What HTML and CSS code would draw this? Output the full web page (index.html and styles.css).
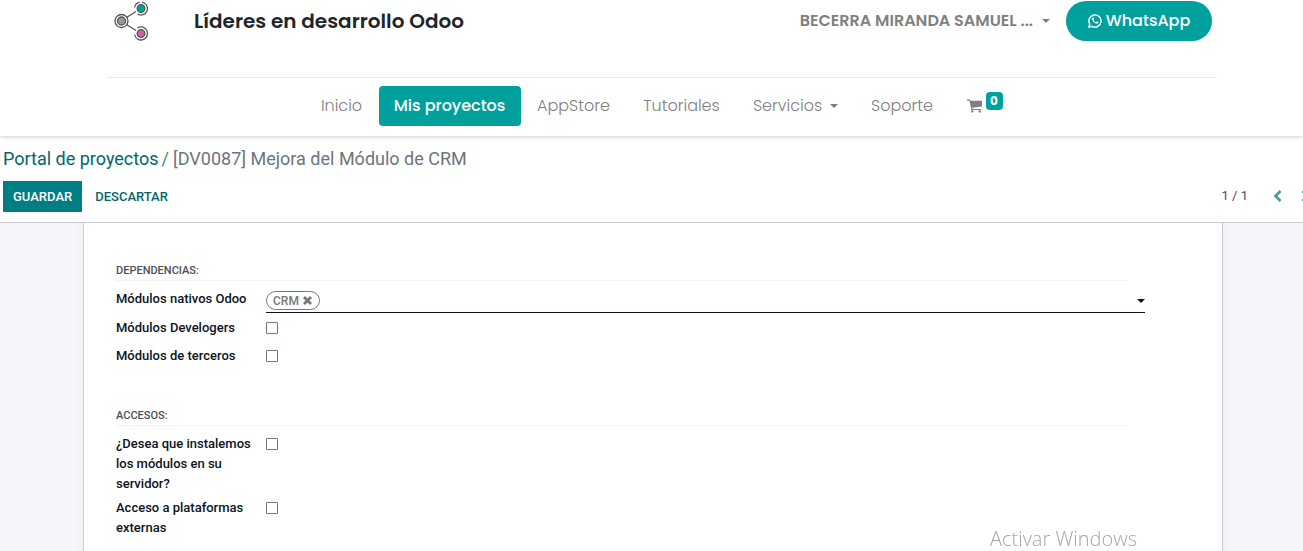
FILE: index.html
```html
<!DOCTYPE html>
<html lang="es">
<head>
<meta charset="utf-8">
<meta name="viewport" content="width=device-width, initial-scale=1">
<title>Mejora del Módulo de CRM</title>
<link rel="stylesheet" href="styles.css">
</head>
<body>
<header class="site-header">
  <div class="brand-row">
    <a class="logo" href="#" aria-label="Portada">
      <svg width="36" height="42" viewBox="0 0 36 42" fill="none" stroke="#555" stroke-width="1.3">
        <path d="M12.500 17.500L22 11.500M12.500 24.500L22 30.500"/>
        <circle cx="7.500" cy="21" r="6.500"/>
        <circle cx="7.500" cy="21" r="4" fill="#999"/>
        <circle cx="27" cy="8.500" r="3.800" fill="#00a09d"/>
        <circle cx="27" cy="33.500" r="3.800" fill="#d062a0"/>
        <path d="M20.600 7.500A6.500 6.500 0 0 1 25.500 2.200M28 2.100A6.500 6.500 0 1 1 23.500 14"/>
        <path d="M23.500 28A6.500 6.500 0 1 1 20.600 34.500M23.500 39A6.500 6.500 0 0 0 28 40"/>
      </svg>
    </a>
    <p class="tagline">Líderes en desarrollo Odoo</p>
    <button class="user-menu" type="button"><span>BECERRA MIRANDA SAMUEL ...</span><span class="caret"></span></button>
    <a class="whatsapp" href="#">
      <svg width="14" height="14" viewBox="0 0 14 14" fill="none" stroke="#fff" stroke-width="1.400">
        <path d="M.9 13.100l.8-3.100A6.100 6.100 0 1 1 4 12.300z"/>
        <path d="M4.700 3.500c-1.200 1-.5 2.900 1 4.400s3.500 2.300 4.600 1.100l.1-.9-1.500-.8-.9.900C6.800 7.800 6 7 5.500 5.900l.7-.8-.6-1.600z" fill="#fff" stroke="none"/>
      </svg>
      <span>WhatsApp</span>
    </a>
  </div>
  <nav class="main-nav">
    <a href="#">Inicio</a>
    <a class="active" href="#">Mis proyectos</a>
    <a href="#">AppStore</a>
    <a href="#">Tutoriales</a>
    <a href="#">Servicios<span class="caret"></span></a>
    <a href="#">Soporte</a>
    <a class="cart" href="#" aria-label="Carrito">
      <svg width="16" height="14" viewBox="0 0 16 14" fill="#808080"><path d="M0 .5h2.700c.4 0 .6.300.7 1.300H15v5.700L5.200 8.700l.3 1.200H14v1.200H4.300L2.500 1.700H0z"/><circle cx="5.300" cy="12.400" r="1.200"/><circle cx="12.700" cy="12.400" r="1.200"/></svg>
      <span class="badge">0</span>
    </a>
  </nav>
</header>
<main>
  <div class="control-panel">
    <nav class="breadcrumb"><a href="#">Portal de proyectos</a><span class="slash">/</span><span>[DV0087] Mejora del Módulo de CRM</span></nav>
    <div class="actions">
      <button class="btn primary" type="button">GUARDAR</button>
      <button class="btn" type="button">DESCARTAR</button>
      <div class="pager">
        <span>1 / 1</span>
        <button type="button" aria-label="Anterior"><svg width="9" height="12" viewBox="0 0 9 12" fill="none" stroke="#4d9599" stroke-width="2.600"><path d="M7.500 1L2.500 6l5 5"/></svg></button>
        <button type="button" aria-label="Siguiente"><svg width="9" height="12" viewBox="0 0 9 12" fill="none" stroke="#4d9599" stroke-width="2.600"><path d="M1.500 1l5 5-5 5"/></svg></button>
      </div>
    </div>
  </div>
  <div class="content">
    <form class="sheet">
      <section class="group">
        <h2>DEPENDENCIAS:</h2>
        <div class="field">
          <label for="native">Módulos nativos Odoo</label>
          <div class="tags">
            <span class="tag">CRM <button type="button" aria-label="Quitar CRM"><svg width="9" height="9" viewBox="0 0 9 9" stroke="#777" stroke-width="2.800"><path d="M1 1l7 7M8 1L1 8"/></svg></button></span>
            <input id="native" type="text">
            <span class="caret"></span>
          </div>
        </div>
        <div class="field"><label for="dev">Módulos Develogers</label><input id="dev" type="checkbox"></div>
        <div class="field"><label for="third">Módulos de terceros</label><input id="third" type="checkbox"></div>
      </section>
      <section class="group">
        <h2>ACCESOS:</h2>
        <div class="field"><label for="install">¿Desea que instalemos los módulos en su servidor?</label><input id="install" type="checkbox"></div>
        <div class="field"><label for="access">Acceso a plataformas externas</label><input id="access" type="checkbox"></div>
      </section>
    </form>
  </div>
</main>
<div class="watermark">Activar Windows</div>
</body>
</html>
```
FILE: styles.css
```css
* { box-sizing: border-box; }
body {
  margin: 0;
  min-height: 100vh;
  display: flex;
  flex-direction: column;
  overflow-x: hidden;
  background: #fff;
  color: #0d1321;
  font: 13px/20px Roboto, sans-serif;
}
a { text-decoration: none; }
button { font: inherit; border: 0; background: none; padding: 0; cursor: pointer; }
svg { display: block; flex: none; }
.caret {
  flex: none;
  border: 4px solid transparent;
  border-top-color: currentColor;
  border-bottom: 0;
}

.site-header {
  padding: 0 86px 0 107px;
  font-family: Poppins, Inter, sans-serif;
  font-size: 16px;
  line-height: 24px;
  box-shadow: 0 1px 4px rgba(0, 0, 0, .2);
}
.brand-row {
  display: flex;
  align-items: flex-start;
  height: 78px;
  padding: 0 5px 0 7px;
  border-bottom: 1px solid #e9e9e9;
}
.logo { width: 80px; }
.tagline {
  margin: 0;
  flex: 1;
  color: #212529;
  font-size: 20px;
  font-weight: 600;
  line-height: 42px;
}
.user-menu {
  display: flex;
  align-items: center;
  gap: 9px;
  height: 41px;
  margin-right: 16px;
  color: #808080;
  font-weight: 600;
}
.whatsapp {
  display: flex;
  align-items: center;
  justify-content: center;
  gap: 4px;
  width: 146px;
  height: 40px;
  margin-top: 1px;
  border-radius: 20px;
  background: #00a09d;
  color: #fff;
  font-weight: 500;
}
.main-nav {
  display: grid;
  grid-template-columns: 74px 142px 106px 110px 118px 95px 70px;
  justify-content: center;
  padding: 8px 0 10px;
}
.main-nav a {
  display: flex;
  align-items: center;
  justify-content: center;
  gap: 8px;
  height: 40px;
  color: #808080;
  font-weight: 300;
}
.main-nav .active {
  border-radius: 4px;
  background: #00a09d;
  color: #fff;
  font-weight: 500;
}
.main-nav .cart { gap: 3px; }
.badge {
  width: 17px;
  height: 18px;
  margin-bottom: 10px;
  border-radius: 4px;
  background: #00a09d;
  color: #fff;
  font-size: 12px;
  font-weight: 700;
  line-height: 18px;
  text-align: center;
}

main { flex: 1; display: flex; flex-direction: column; }
.control-panel {
  padding: 12px 0 10px 3px;
  border-bottom: 1px solid #c9ccd2;
}
.breadcrumb { color: #6c757d; font-size: 18px; line-height: 22px; }
.breadcrumb a { color: #01666b; }
.slash { margin: 0 4px 0 3px; }
.actions { display: flex; align-items: center; margin-top: 11px; }
.btn {
  height: 31px;
  padding: 0 10px;
  color: #01666b;
  font-weight: 500;
}
.btn.primary { margin-right: 3px; background: #017e84; color: #fff; }
.pager {
  display: flex;
  align-items: center;
  gap: 19px;
  margin: 0 -7px 2px auto;
  color: #4c4c4c;
}
.pager span { margin-right: 6px; }

.content {
  flex: 1;
  display: flex;
  padding: 0 80px 0 83px;
  background: #f5f6fa;
}
.sheet {
  flex: 1;
  padding: 38px 77px 32px 32px;
  border: solid #c9ccd2;
  border-width: 0 1px;
  background: #fff;
  box-shadow: 0 0 10px rgba(0, 0, 0, .06);
  clip-path: inset(0 -16px);
}
.group { margin-bottom: 36px; }
.group:last-child { margin-bottom: 0; }
.group h2 {
  margin: 0 17px 8px 0;
  border-bottom: 1px solid #f1f2f4;
  color: #495057;
  font-size: 11px;
  font-weight: 500;
  line-height: 19px;
}
.field {
  display: grid;
  grid-template-columns: 138px 1fr;
  column-gap: 12px;
  align-items: start;
  min-height: 24px;
  margin-bottom: 4px;
}
.field:last-child { margin-bottom: 4px; }
.field label { font-weight: 500; }
.field > input {
  appearance: none;
  width: 12px;
  height: 12px;
  margin: 4px 0 0;
  border: 1px solid #71757f;
  border-radius: 1px;
  background: #fff;
}
.tags {
  display: flex;
  align-items: center;
  height: 24px;
  margin-bottom: 1px;
  border-bottom: 1px solid #0d1321;
}
.tag {
  display: flex;
  align-items: center;
  gap: 4px;
  height: 19px;
  padding: 0 7px 0 6px;
  border: 1px solid #777;
  border-radius: 10px;
  color: #777;
  font-size: 12px;
  font-weight: 500;
}
.tags input {
  flex: 1;
  min-width: 0;
  height: 18px;
  border: 0;
  outline: 0;
  background: none;
}
.watermark {
  position: fixed;
  right: 166px;
  bottom: 0;
  color: #a6a6a6;
  font: 20px/24px "Open Sans", "Noto Sans", sans-serif;
  font-weight: 300;
}
```
